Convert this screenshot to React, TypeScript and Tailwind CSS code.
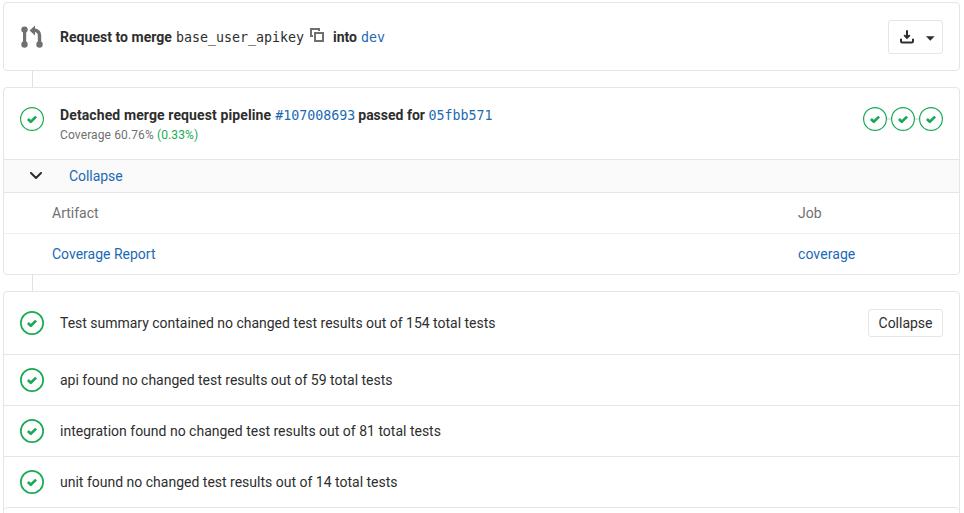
import React from 'react';

const mono = "relative top-px font-['DejaVu_Sans_Mono',monospace] text-[13.3px] leading-5 font-normal";

function StatusIcon({ stroke = 1.2 }: { stroke?: number }) {
  return (
    <svg className="size-6 shrink-0 text-[#1aaa55]" viewBox="0 0 24 24" fill="none">
      <circle cx="12" cy="12" r={12 - stroke / 2} stroke="currentColor" strokeWidth={stroke} />
      <path d="M7.9 12 10.8 14.8 16.1 9.6" stroke="currentColor" strokeWidth="2.7" strokeLinejoin="round" />
    </svg>
  );
}

function MergeIcon() {
  return (
    <svg className="size-6 shrink-0 text-[#707070]" viewBox="0 0 24 24" fill="currentColor">
      <circle cx="4.5" cy="4.6" r="3.2" />
      <circle cx="4.5" cy="19.5" r="3.2" />
      <circle cx="19.5" cy="19.5" r="3.2" />
      <path d="M3 5h3.2v15H3z" />
      <path d="M9.6 5.6 15 .6v2.8c3.9.4 6.2 3.3 6.2 7.4V19h-3.4v-8.2c0-2.3-1-3.6-2.8-3.9v3.7z" />
    </svg>
  );
}

function CopyIcon() {
  return (
    <svg className="size-[14px]" viewBox="0 0 14 14" fill="none" stroke="#707070" strokeWidth="2">
      <path d="M3 8H1V1h8v2" />
      <path d="M5 5h8v8H5z" />
    </svg>
  );
}

function DownloadIcon() {
  return (
    <svg className="size-[14px]" viewBox="0 0 14 14" fill="none" stroke="#2e2e2e" strokeWidth="2">
      <path d="M7 .3v7" />
      <path d="M4.2 5.1 7 7.8l2.8-2.7" />
      <path d="M1 8.7v2.6q0 1.2 1.2 1.2h9.6q1.2 0 1.2-1.2V8.7" />
    </svg>
  );
}

function Connector() {
  return (
    <div className="flex h-4 pl-[29px]">
      <div className="w-px bg-[#e1e1e1]" />
    </div>
  );
}

function ReportRow({ text, children, className = '' }: { text: string; children?: React.ReactNode; className?: string }) {
  return (
    <div className={`flex items-center border-b border-[#e5e5e5] px-4 ${className}`}>
      <StatusIcon stroke={1.7} />
      <span className="ml-4 flex-1">{text}</span>
      {children}
    </div>
  );
}

export default function App() {
  return (
    <div className="h-[513px] w-[964px] overflow-hidden bg-white pl-[3px] pt-[2px] font-[Roboto,sans-serif] text-[14px] leading-5 text-[#2e2e2e]">
      <section className="flex h-[69px] w-[957px] items-center rounded border border-[#e5e5e5] px-4">
        <MergeIcon />
        <div className="ml-4 flex flex-1 items-center font-bold">
          <span className="tracking-[0.03px]">Request to merge</span>
          <span className={`${mono} ml-1`}>base_user_apikey</span>
          <span className="ml-[6px] mt-[-4px]"><CopyIcon /></span>
          <span className="ml-[9px]">into</span>
          <a className={`${mono} ml-1 text-[#1b69b6]`}>dev</a>
        </div>
        <button className="flex h-[34px] w-[55px] items-center rounded-[3px] border border-[#e5e5e5] pl-[11px]">
          <DownloadIcon />
          <svg className="ml-3 mt-[3px] h-[5px] w-[9px]" viewBox="0 0 9 5"><path d="M0 .2h8.6L4.3 4.7z" fill="#2e2e2e" /></svg>
        </button>
      </section>
      <Connector />
      <section className="h-[188px] w-[957px] overflow-hidden rounded border border-[#e5e5e5]">
        <div className="flex h-[71px] items-start px-4 pt-[17px]">
          <div className="pt-[2px]"><StatusIcon /></div>
          <div className="ml-4 flex-1">
            <div className="flex font-bold">
              <span className="tracking-[0.11px]">Detached merge request pipeline</span>
              <a className={`${mono} ml-1 text-[#1b69b6]`}>#107008693</a>
              <span className="ml-[3px]">passed for</span>
              <a className={`${mono} ml-[3.5px] text-[#1b69b6]`}>05fbb571</a>
            </div>
            <div className="text-[12px] tracking-[0.12px] text-[#707070]">Coverage 60.76% <span className="text-[#1aaa55]">(0.33%)</span></div>
          </div>
          <div className="flex items-center pt-[2px]">
            <StatusIcon />
            <div className="h-[2px] w-1 bg-[#e5e5e5]" />
            <StatusIcon />
            <div className="h-[2px] w-1 bg-[#e5e5e5]" />
            <StatusIcon />
          </div>
        </div>
        <div className="flex h-[34px] items-center border-y border-[#e5e5e5] bg-[#fafafa] pl-[26px]">
          <svg className="h-[8px] w-[12px]" viewBox="0 0 12 8" fill="none"><path d="m1 1 5 5 5-5" stroke="#2e2e2e" strokeWidth="2" strokeLinecap="round" strokeLinejoin="round" /></svg>
          <a className="ml-[27px] tracking-[-0.06px] text-[#1b69b6]">Collapse</a>
        </div>
        <div className="flex h-[41px] items-center border-b border-[#f0f0f0] pl-12 text-[#707070]">
          <span className="w-[746px]">Artifact</span>
          <span>Job</span>
        </div>
        <div className="flex h-10 items-center pl-12 text-[#1b69b6]">
          <a className="w-[746px]">Coverage Report</a>
          <a className="tracking-[0.08px]">coverage</a>
        </div>
      </section>
      <Connector />
      <section className="h-[240px] w-[957px] rounded-t border border-[#e5e5e5]">
        <ReportRow className="h-[63px] tracking-[-0.015px]" text="Test summary contained no changed test results out of 154 total tests">
          <button className="h-7 w-[75px] rounded-[3px] border border-[#e5e5e5]">Collapse</button>
        </ReportRow>
        <ReportRow className="h-[51px] tracking-[-0.01px]" text="api found no changed test results out of 59 total tests" />
        <ReportRow className="h-[51px]" text="integration found no changed test results out of 81 total tests" />
        <ReportRow className="h-[50px] border-b-0" text="unit found no changed test results out of 14 total tests" />
        <div className="h-6 rounded-t border-t border-[#e5e5e5]" />
      </section>
    </div>
  );
}
